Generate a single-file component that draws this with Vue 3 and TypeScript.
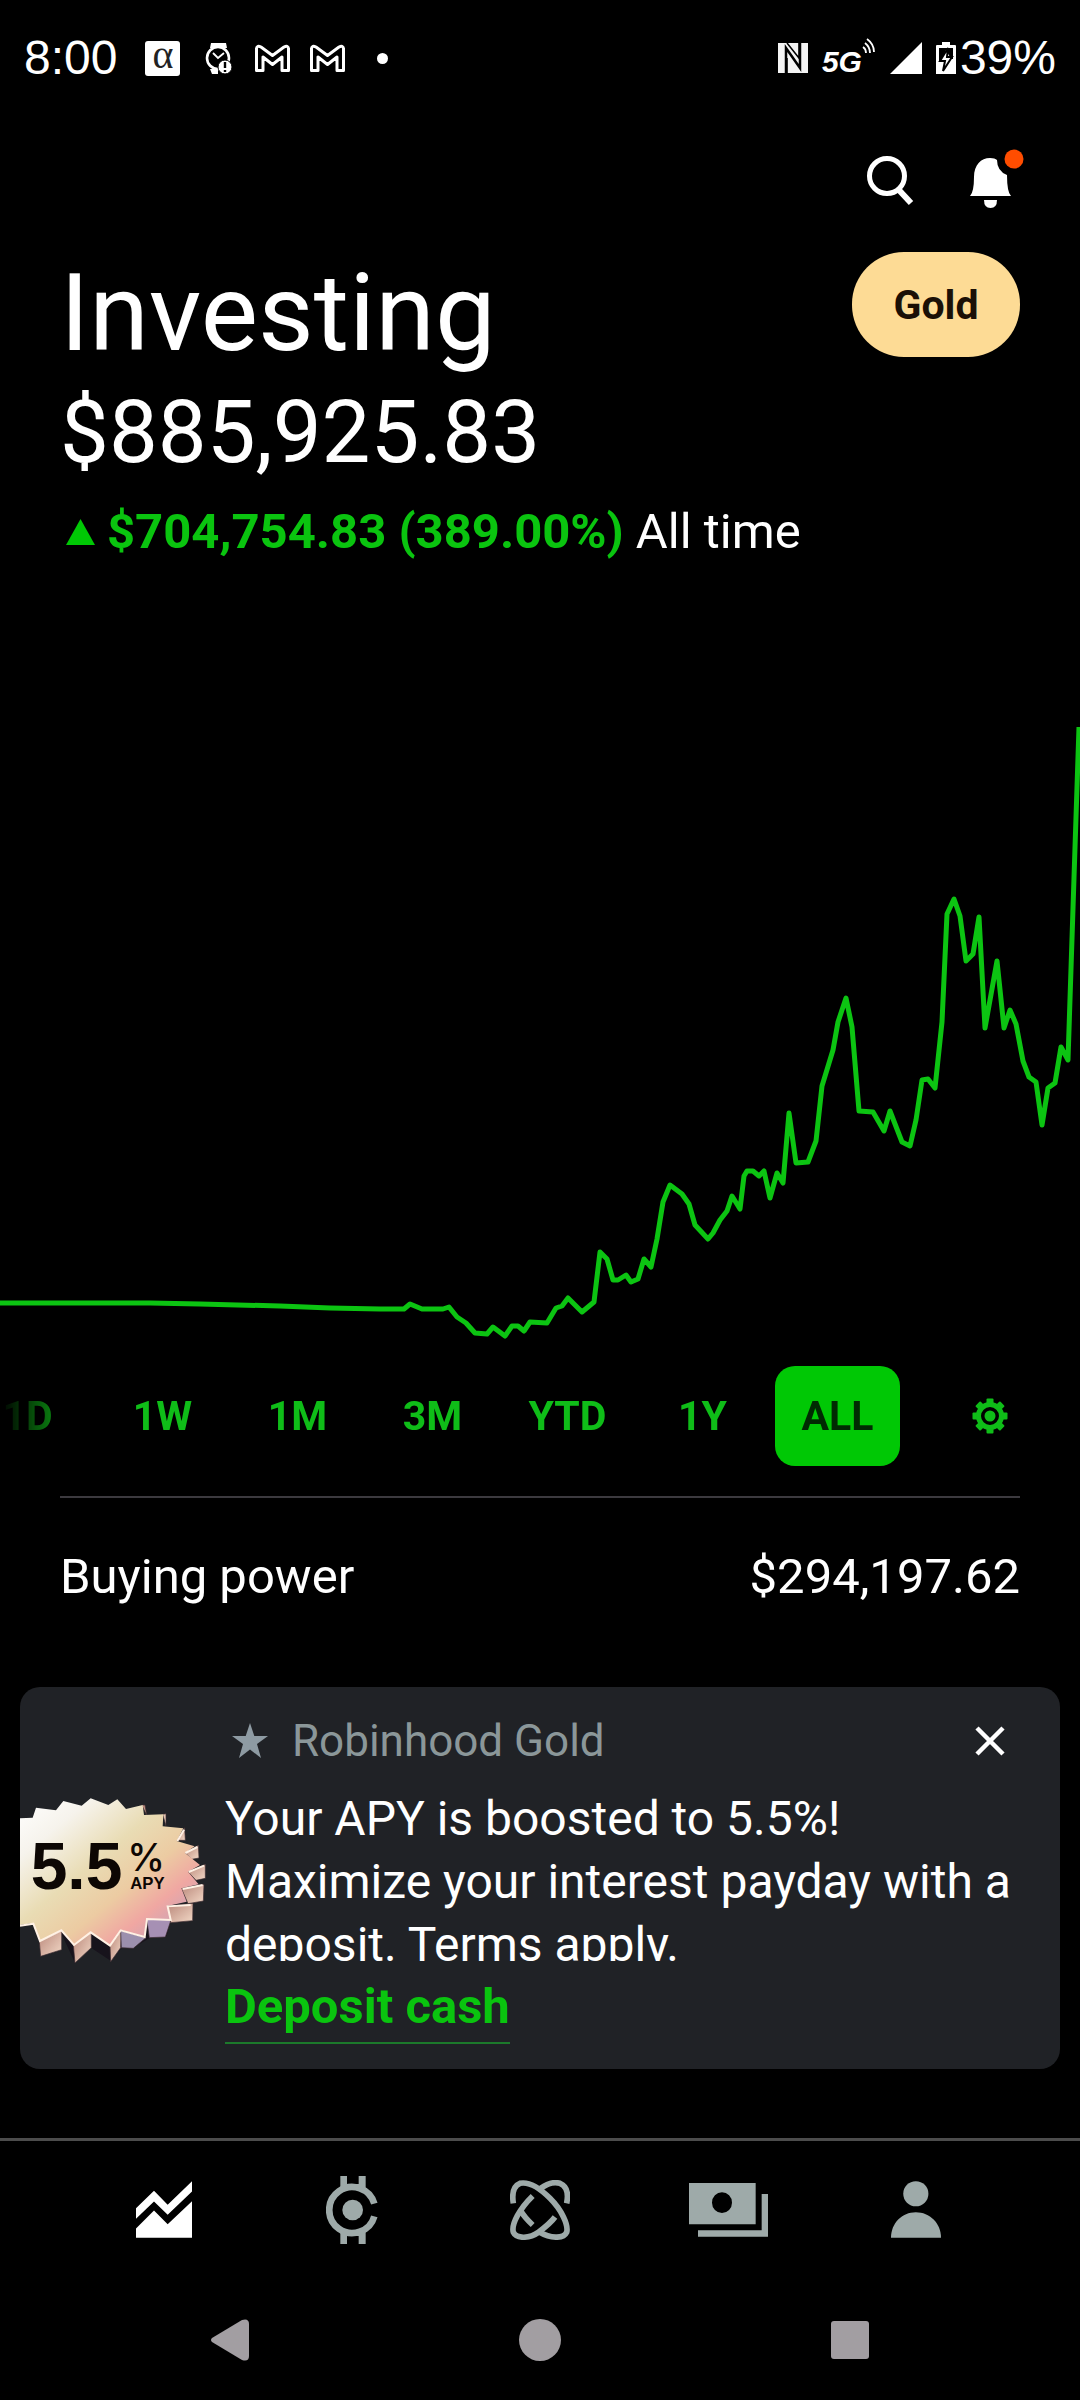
<script setup lang="ts">
import { computed, ref } from 'vue'

const ranges: string[] = ['1D', '1W', '1M', '3M', 'YTD', '1Y', 'ALL']
const selected = ref('ALL')

// Portfolio value over time, in chart units.
const history: [number, number][] = [
  [0, 1303], [150, 1303], [200, 1304], [280, 1306], [330, 1308], [380, 1309], [404, 1309], [410, 1304],
  [422, 1309], [443, 1309], [449, 1307], [457, 1317], [466, 1323], [475, 1333], [487, 1334],
  [493, 1327], [505, 1336], [512, 1326], [518, 1326], [524, 1331], [530, 1322], [547, 1323],
  [556, 1308], [562, 1306], [568, 1298], [582, 1312], [594, 1302], [600, 1252], [607, 1259],
  [613, 1280], [618, 1280], [626, 1275], [631, 1282], [638, 1279], [644, 1259], [651, 1267],
  [657, 1239], [663, 1202], [670, 1185], [682, 1194], [689, 1204], [695, 1225], [708, 1239],
  [713, 1233], [720, 1220], [727, 1211], [732, 1196], [740, 1209], [744, 1176], [747, 1171],
  [753, 1171], [759, 1176], [764, 1171], [770, 1198], [777, 1173], [783, 1183], [789, 1113],
  [796, 1163], [808, 1162], [816, 1141], [822, 1086], [833, 1050], [838, 1022], [846, 998],
  [852, 1027], [859, 1111], [873, 1112], [884, 1131], [890, 1111], [902, 1142], [910, 1146],
  [916, 1120], [922, 1080], [928, 1079], [935, 1088], [942, 1022], [947, 914], [954, 899],
  [960, 916], [966, 961], [973, 954], [979, 917], [985, 1028], [997, 961], [1004, 1028],
  [1010, 1010], [1016, 1024], [1023, 1061], [1029, 1077], [1036, 1082], [1042, 1125],
  [1048, 1088], [1055, 1083], [1061, 1047], [1068, 1060], [1074, 878], [1079, 727],
]
const linePoints = computed(() => history.map(([x, y]) => `${x},${y}`).join(' '))

const showPromo = ref(true)
</script>

<template>
  <div class="screen">
    <div class="status">
      <div class="status-left">
        <span class="clock">8:00</span>
        <div class="status-apps">
          <span class="alpha">α</span>
          <svg width="35" height="35" viewBox="0 0 35 35">
            <path d="M11 2h15l1 5H10zM10 28h8v5h-6z" fill="#fff" />
            <circle cx="18" cy="17" r="11" fill="#000" stroke="#fff" stroke-width="2.6" />
            <path d="M13 12l5 5 6-5" fill="none" stroke="#fff" stroke-width="1.8" />
            <circle cx="25" cy="26" r="7" fill="#fff" stroke="#000" stroke-width="1" />
            <path d="M25 21v6M25 29v2" stroke="#000" stroke-width="2.4" />
          </svg>
          <svg v-for="n in 2" :key="n" width="35" height="35" viewBox="0 0 35 35">
            <path
              d="M1.5 29.500V7.500Q2 4 6 6L17.500 14.500L29 6Q33 4 33.500 7.500V29.500H27V16L17.500 23.500L8 16V29.500Z"
              fill="none" stroke="#fff" stroke-width="3" stroke-linejoin="round"
            />
          </svg>
          <svg width="35" height="35" viewBox="0 0 35 35"><circle cx="17.500" cy="17.500" r="5.500" fill="#fff" /></svg>
        </div>
      </div>
      <div class="status-right">
        <svg width="30" height="32" viewBox="0 0 30 32">
          <path d="M0 1h30v30H0z" fill="#f4f4f4" />
          <path d="M8 31V6l14 20V1" fill="none" stroke="#000" stroke-width="2.500" />
          <path d="M9 1l12 15V1M9 31V16" fill="none" stroke="#000" stroke-width="1.500" />
        </svg>
        <div class="network">
          <span class="network-name">5G</span>
          <svg width="14" height="16" viewBox="0 0 14 16">
            <path d="M1 9q3 2 3 6M3 5q5 4 5 10M5 1q7 5 7 13" fill="none" stroke="#fff" stroke-width="1.800" />
          </svg>
        </div>
        <svg width="32" height="32" viewBox="0 0 32 32"><path d="M32 0v32H0z" fill="#fff" /></svg>
        <div class="battery">
          <svg width="20" height="32" viewBox="0 0 20 32">
            <path d="M6 0h8v3h5q1 0 1 1v28H0V4q0-1 1-1h5z" fill="#fff" />
            <path d="M3 6h14v11h-2l-5-9-6 12H3z" fill="#000" />
            <path d="M12 6L4 19h5l-2 10 9-14h-5z" fill="#fff" stroke="#000" stroke-width="2" />
          </svg>
          <span class="clock">39%</span>
        </div>
      </div>
    </div>

    <header class="actions">
      <button class="icon-button" aria-label="Search">
        <svg width="50" height="56" viewBox="0 0 50 56">
          <circle cx="21" cy="25" r="17.500" fill="none" stroke="#fff" stroke-width="5" />
          <path d="M32 38l13 14" stroke="#fff" stroke-width="6" />
        </svg>
      </button>
      <button class="icon-button" aria-label="Notifications">
        <svg width="54" height="60" viewBox="0 0 54 60">
          <path d="M0 47Q4 43 4 28C4 16 11 9 20 9q5 0 7 2 0 11 10 15Q37 43 41 47Z" fill="#fff" />
          <path d="M14 51h13q0 8-6.500 8T14 51z" fill="#fff" />
          <circle cx="44" cy="10" r="9.500" fill="#ff4d00" />
        </svg>
      </button>
    </header>

    <main class="content">
      <section class="summary">
        <div class="title-row">
          <h1>Investing</h1>
          <button class="gold">Gold</button>
        </div>
        <p class="balance">$885,925.83</p>
        <p class="change">
          <svg width="29" height="26" viewBox="0 0 29 26"><path d="M14.500 0L29 26H0z" fill="#00c805" /></svg>
          <strong>$704,754.83 (389.00%)</strong>
          <span>All time</span>
        </p>
      </section>

      <svg class="chart" viewBox="0 700 1080 640" role="img" aria-label="Portfolio value, all time">
        <polyline :points="linePoints" fill="none" stroke="#0cc412" stroke-width="5" stroke-linejoin="round" />
      </svg>

      <div class="ranges">
        <div class="range-list">
          <button
            v-for="r in ranges"
            :key="r"
            class="range"
            :class="{ active: r === selected }"
            @click="selected = r"
          >{{ r }}</button>
        </div>
        <button class="icon-button settings" aria-label="Chart settings">
          <svg width="36" height="36" viewBox="-18 -18 36 36">
            <g fill="#0fbd18">
              <rect v-for="n in 8" :key="n" x="-3.500" y="-17.500" width="7" height="8" rx="1" :transform="`rotate(${n * 45})`" />
            </g>
            <circle r="11.500" fill="none" stroke="#0fbd18" stroke-width="5" />
            <circle r="5.500" fill="#0fbd18" />
          </svg>
        </button>
      </div>

      <div class="buying">
        <span>Buying power</span>
        <span>$294,197.62</span>
      </div>

      <article v-if="showPromo" class="promo">
        <svg class="badge" width="187" height="170" viewBox="60 48 561 510" role="img" aria-label="5.5% APY">
          <defs>
            <linearGradient id="face" x1="0" y1="0" x2="1" y2="1">
              <stop offset="0" stop-color="#ffffff" />
              <stop offset="0.2" stop-color="#f6f3ec" />
              <stop offset="0.42" stop-color="#e9dcb4" />
              <stop offset="0.6" stop-color="#eccba2" />
              <stop offset="0.74" stop-color="#f0a7a2" />
              <stop offset="0.88" stop-color="#c9a3b8" />
            </linearGradient>
            <linearGradient id="side" x1="0" y1="0" x2="1" y2="1">
              <stop offset="0" stop-color="#b9877a" />
              <stop offset="1" stop-color="#f2d8c6" />
            </linearGradient>
          </defs>
          <path d="M185 460L225 545 273 500 333 540 365 500 400 500 450 470 500 465 512 420 400 380 150 420z" fill="#17131c" />
          <g fill="url(#side)" stroke="#3b2a30" stroke-width="2">
            <path d="M118 482l67-34v58l-63 20z" />
            <path d="M220 492l54-40v48l-49 46z" />
            <path d="M330 494l34-46-2 52-30 42z" />
            <path d="M362 448l76 22-38 32-36-2z" fill="#9c90ad" />
            <path d="M440 414h74l-18 54-48 2z" fill="#a690b4" />
            <path d="M502 375l77-8-1 52-66 6z" />
            <path d="M544 322l68-12-2 50-46 8z" />
            <path d="M564 272l52-22v42l-28 6z" />
            <path d="M555 215l40-22 2 38-22 4z" />
            <path d="M530 178l24-38 2 38z" />
            <path d="M425 72l10 0 5 30zM488 100l10-2v36z" />
          </g>
          <path
            d="M60 112L98 110 108 80 168 88 190 60 245 74 272 52 325 72 352 55 378 84 428 72 432 102 490 100 488 136 550 142 530 180 584 196 555 216 600 252 564 272 596 310 544 322 560 362 502 375 512 414 440 414 434 470 362 446 330 496 272 452 222 494 184 446 120 482 100 426 60 432Z"
            fill="url(#face)"
          />
          <path
            d="M60 434L100 428 120 480 184 448 222 492 272 454 330 494 362 448 434 468 441 414 512 417 503 376 572 372M548 324L608 312M566 273L612 254M556 216L592 198M532 180L552 146"
            fill="none" stroke="#fff1e4" stroke-width="6"
          />
          <g class="badge-text">
            <text x="92" y="325" font-size="198">5.5</text>
            <text class="percent" x="382" y="270" font-size="114">%</text>
            <text x="391" y="324" font-size="50">APY</text>
          </g>
        </svg>
        <div class="promo-body">
          <div class="promo-head">
            <svg width="36" height="36" viewBox="0 0 36 36">
              <path d="M18 0l4.300 13H36L25 21l4 14-11-8.500L7 35l4-14L0 13h13.700z" fill="#8e9ba3" />
            </svg>
            <h2>Robinhood Gold</h2>
            <button class="icon-button" aria-label="Dismiss" @click="showPromo = false">
              <svg width="30" height="30" viewBox="0 0 30 30">
                <path d="M2 2l26 26M28 2L2 28" stroke="#fff" stroke-width="4.500" />
              </svg>
            </button>
          </div>
          <p class="promo-text">Your APY is boosted to 5.5%!<br />Maximize your interest payday with a deposit. Terms apply.</p>
          <a class="promo-link" href="#">Deposit cash</a>
        </div>
      </article>
    </main>

    <nav class="tabs" aria-label="Main">
      <a href="#" aria-label="Investing" aria-current="page">
        <svg width="56" height="57" viewBox="108 183 168 170" fill="#fff">
          <path d="M108 264L162 212 203 254 276 183V214L203 284 162 244 108 296z" />
          <path d="M108 325L162 271 203 312 276 243V353H108z" />
        </svg>
      </a>
      <a href="#" aria-label="Crypto">
        <svg width="53" height="68" viewBox="677 168 159 204">
          <path d="M822 251A69 69 0 1 0 822 289" fill="none" stroke="#9eaaa9" stroke-width="20" />
          <path d="M720 168h20v24h35v-24h21v38h-76zM720 372h20v-24h35v24h21v-38h-76z" fill="#9eaaa9" />
          <circle cx="757" cy="270" r="31" fill="#9eaaa9" />
        </svg>
      </a>
      <a href="#" aria-label="Discover">
        <svg width="60" height="60" viewBox="30 180 180 180" fill="none" stroke="#9eaaa9" stroke-width="17">
          <path d="M40 250C36 225 36 200 60 190C90 184 120 205 150 235C185 270 206 315 200 337C190 358 150 355 118 336M98 315C85 303 72 290 62 272" />
          <path d="M200 250C205 225 204 200 180 190C160 184 140 192 122 205M98 228C60 265 33 312 40 337C50 358 90 355 115 337C135 322 155 305 165 291" />
        </svg>
      </a>
      <a href="#" aria-label="Cash">
        <svg width="79" height="54" viewBox="567 195 237 162" fill="#9eaaa9">
          <path fill-rule="evenodd" d="M567 195H767V319H567zM636 254a30 31 0 1 0 60 0a30 31 0 1 0-60 0z" />
          <path d="M594 337H785V228H804V356H594z" />
        </svg>
      </a>
      <a href="#" aria-label="Account">
        <svg width="50" height="57" viewBox="1172 183 151 171" fill="#9eaaa9">
          <circle cx="1247" cy="221" r="38" />
          <path d="M1172 354C1172 310 1205 277 1247 277S1323 310 1323 354z" />
        </svg>
      </a>
    </nav>

    <div class="system-nav">
      <button class="icon-button" aria-label="Back">
        <svg width="38" height="42" viewBox="0 0 38 42"><path d="M1 19L31 1Q38-1 38 5V37Q38 43 31 41L1 23Q-1 21 1 19z" fill="#a29ea2" /></svg>
      </button>
      <button class="icon-button" aria-label="Home">
        <svg width="42" height="42" viewBox="0 0 42 42"><circle cx="21" cy="21" r="21" fill="#a29ea2" /></svg>
      </button>
      <button class="icon-button" aria-label="Recents">
        <svg width="38" height="38" viewBox="0 0 38 38"><rect width="38" height="38" rx="3" fill="#a29ea2" /></svg>
      </button>
    </div>
  </div>
</template>

<style>
body {
  background: #000;
}
</style>

<style scoped>
.screen {
  display: flex;
  flex-direction: column;
  min-height: 100vh;
  overflow: hidden;
  background: #000;
  color: #fff;
  font-family: Roboto, 'Liberation Sans', sans-serif;
  font-size: 49px;
  line-height: 56px;
}

.screen *,
.screen {
  box-sizing: border-box;
}

h1,
h2,
p {
  margin: 0;
  font-weight: 400;
}

svg {
  display: block;
  flex: none;
}

button {
  border: 0;
  padding: 0;
  background: none;
  color: inherit;
  font: inherit;
  cursor: pointer;
}

.icon-button {
  display: flex;
  align-items: center;
  justify-content: center;
}

.status {
  display: flex;
  align-items: center;
  justify-content: space-between;
  height: 116px;
  padding: 0 24px;
}

.status-left,
.status-right,
.status-apps,
.battery {
  display: flex;
  align-items: center;
}

.status-left {
  gap: 28px;
}

.status-apps {
  gap: 20px;
}

.status-right {
  gap: 14px;
}

.clock {
  font-family: 'Liberation Sans', sans-serif;
  font-size: 48px;
}

.battery {
  gap: 4px;
}

.alpha {
  width: 35px;
  height: 35px;
  border-radius: 3px;
  background: #fff;
  color: #222;
  font-family: 'Liberation Serif', serif;
  font-size: 40px;
  line-height: 28px;
  text-align: center;
}

.network {
  display: flex;
  align-items: flex-start;
}

.network-name {
  padding-top: 8px;
  font-family: 'Liberation Sans', sans-serif;
  font-size: 30px;
  font-style: italic;
  font-weight: 700;
  line-height: 32px;
}

.actions {
  display: flex;
  justify-content: flex-end;
  gap: 54px;
  height: 136px;
  padding: 33px 56px 0 0;
}

.actions .icon-button {
  height: 60px;
}

.content {
  display: flex;
  flex-direction: column;
}

.summary {
  padding: 0 60px;
}

.title-row {
  display: flex;
  align-items: flex-start;
  justify-content: space-between;
}

h1 {
  font-size: 108px;
  line-height: 122px;
}

.gold {
  width: 168px;
  height: 105px;
  border-radius: 52px;
  background: #fddb95;
  color: #1b1006;
  font-size: 41px;
  font-weight: 700;
}

.balance {
  margin-top: 10px;
  font-size: 87px;
  line-height: 96px;
}

.change {
  display: flex;
  align-items: center;
  gap: 12px;
  margin-top: 24px;
  padding-left: 6px;
}

.change strong {
  color: #0ac40f;
  font-weight: 700;
}

.chart {
  width: 100%;
  margin-top: 140px;
}

.ranges {
  display: flex;
  margin-top: 26px;
}

.range-list {
  display: flex;
  flex: 1;
  gap: 10px;
  justify-content: flex-end;
  min-width: 0;
  overflow: hidden;
  mask-image: linear-gradient(90deg, transparent, #000 80px);
}

.range {
  flex: none;
  width: 125px;
  height: 100px;
  border-radius: 20px;
  color: #0fbd18;
  font-size: 41px;
  font-weight: 700;
}

.range.active {
  background: #00c805;
  color: #002a02;
}

.settings {
  width: 180px;
}

.buying {
  display: flex;
  justify-content: space-between;
  margin: 30px 60px 0;
  padding: 51px 0 82px;
  border-top: 2px solid #3c3a3f;
}

.promo {
  display: flex;
  gap: 18px;
  margin: 0 20px;
  padding-top: 28px;
  padding-bottom: 25px;
  border-radius: 20px;
  background: #202226;
}

.badge {
  margin-top: 82px;
}

.badge-text {
  fill: #0d0704;
  font-family: 'Liberation Sans', sans-serif;
  font-weight: 700;
}

.percent {
  font-family: Inter, sans-serif;
  font-weight: 500;
}

.promo-body {
  flex: 1;
  min-width: 0;
}

.promo-head {
  display: flex;
  align-items: center;
  gap: 24px;
  padding: 0 55px 0 7px;
}

h2 {
  flex: 1;
  color: #8b9799;
  font-size: 44px;
  line-height: 52px;
}

.promo-text {
  height: 174px;
  margin-top: 20px;
  overflow: hidden;
  font-size: 48px;
  line-height: 63px;
}

.promo-link {
  display: inline-block;
  margin-top: 14px;
  padding-bottom: 4px;
  border-bottom: 2px solid #1c7a2b;
  color: #0ac40f;
  font-weight: 700;
  line-height: 63px;
  text-decoration: none;
}

.tabs {
  display: flex;
  height: 142px;
  margin-top: auto;
  padding: 0 70px 2px;
  border-top: 3px solid #4c4c4c;
}

.tabs a {
  display: flex;
  flex: 1;
  align-items: center;
  justify-content: center;
}

.system-nav {
  display: flex;
  align-items: center;
  justify-content: space-between;
  height: 120px;
  padding: 0 211px;
}
</style>
